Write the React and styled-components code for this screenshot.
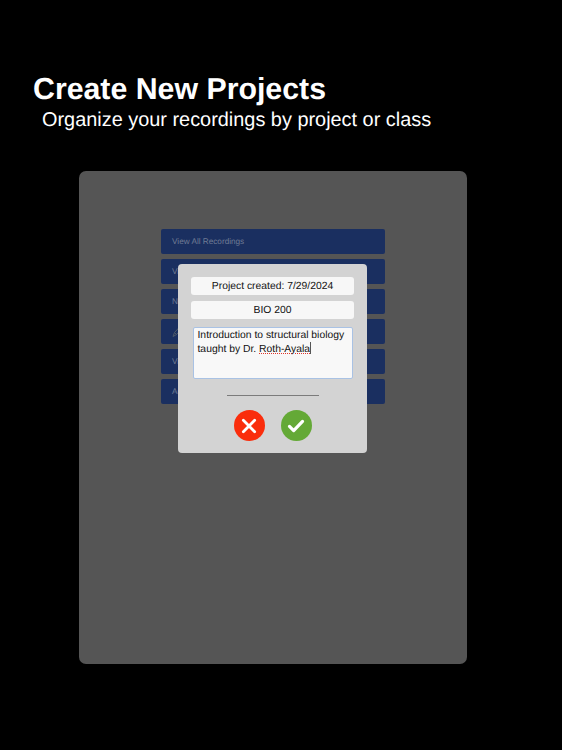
import React from "react";
import styled, { createGlobalStyle } from "styled-components";

const Global = createGlobalStyle`
  html, body { margin: 0; padding: 0; background: #000; }
  body { font-family: "Liberation Sans", Arial, sans-serif; text-rendering: geometricPrecision; }
  * { box-sizing: border-box; }
`;

const Page = styled.div`
  width: 562px;
  height: 750px;
  background: #000;
  overflow: hidden;
  display: flex;
  flex-direction: column;
`;

const Header = styled.header`
  height: 171px;
  padding: 72px 0 0 33px;
  color: #fff;
`;

const Title = styled.h1`
  margin: 0;
  font-size: 30.3px;
  line-height: 35px;
  font-weight: 700;
`;

const Subtitle = styled.p`
  margin: 1px 0 0 9px;
  font-size: 19.9px;
  line-height: 25px;
  font-weight: 400;
`;

const Tablet = styled.main`
  position: relative;
  width: 388px;
  height: 493px;
  margin-left: 79px;
  background: #555555;
  border-radius: 7px;
  padding: 58px 0 0 82px;
  display: flex;
  flex-direction: column;
  gap: 5px;
`;

const MenuRow = styled.div`
  width: 224px;
  height: 25px;
  background: #1a2f60;
  border-radius: 2px;
  padding: 0 0 1px 11px;
  display: flex;
  align-items: center;
  color: #6f7b94;
  font-size: 8.2px;
`;

const Dialog = styled.section`
  position: absolute;
  left: 99px;
  top: 93px;
  width: 189px;
  height: 189px;
  background: #d3d3d3;
  border-radius: 4px;
  padding: 13px 13px 0;
  display: flex;
  flex-direction: column;
  align-items: center;
`;

const Field = styled.div`
  width: 163px;
  height: 18px;
  margin-bottom: 6px;
  padding-top: 1px;
  background: #f7f7f7;
  border-radius: 3px;
  display: flex;
  align-items: center;
  justify-content: center;
  color: #111;
  font-size: 10.35px;
`;

const Notes = styled.div`
  width: 160px;
  height: 52px;
  margin-top: 2px;
  padding: 2px 3px 1px 4px;
  background: #f8f8f8;
  border: 1px solid #a9c2e4;
  border-radius: 2px;
  color: #111;
  font-size: 10.35px;
  line-height: 11.6px;
`;

const NoteLine = styled.div`
  white-space: nowrap;
`;

const Misspelled = styled.span`
  text-decoration: underline dotted #e0352b 1px;
  text-underline-offset: 1px;
`;

const Caret = styled.span`
  display: inline-block;
  width: 1px;
  height: 12px;
  background: #555;
  vertical-align: -2px;
`;

const Divider = styled.hr`
  width: 92px;
  height: 1px;
  margin: 16px 0 14px;
  border: 0;
  background: #7b7b7b;
`;

const Actions = styled.div`
  display: flex;
  gap: 16px;
`;

const RoundButton = styled.button`
  width: 31px;
  height: 31px;
  padding: 0;
  border: 0;
  border-radius: 50%;
  background: ${(p) => p.$color};
  display: flex;
  align-items: center;
  justify-content: center;
`;

const Pencil = () => (
  <svg width="12" height="14" viewBox="0 0 12 14" fill="none" stroke="#4e5a68" strokeWidth="1">
    <path d="M1 12.5 L2.5 8.5 L9 1.5 L11 3.5 L4.5 10.5 Z M2.5 8.5 L4.5 10.5" />
  </svg>
);

export default function App() {
  return (
    <Page>
      <Global />
      <Header>
        <Title>Create New Projects</Title>
        <Subtitle>Organize your recordings by project or class</Subtitle>
      </Header>
      <Tablet>
        <MenuRow>View All Recordings</MenuRow>
        <MenuRow>View</MenuRow>
        <MenuRow>New</MenuRow>
        <MenuRow><Pencil /></MenuRow>
        <MenuRow>View</MenuRow>
        <MenuRow>Add</MenuRow>
        <Dialog>
          <Field>Project created: 7/29/2024</Field>
          <Field>BIO 200</Field>
          <Notes>
            <NoteLine>Introduction to structural biology</NoteLine>
            <NoteLine>taught by Dr. <Misspelled>Roth-Ayala</Misspelled><Caret /></NoteLine>
          </Notes>
          <Divider />
          <Actions>
            <RoundButton $color="#fa2d0c" aria-label="Cancel">
              <svg width="16" height="16" viewBox="0 0 17 17" fill="none" stroke="#fff" strokeWidth="3" strokeLinecap="round">
                <path d="M2.5 2.5 L14.5 14.5 M14.5 2.5 L2.5 14.5" />
              </svg>
            </RoundButton>
            <RoundButton $color="#64a936" aria-label="Confirm">
              <svg width="18" height="14" viewBox="0 0 19 15" fill="none" stroke="#fff" strokeWidth="3.4" strokeLinecap="round" strokeLinejoin="round">
                <path d="M2.5 8 L7 12.5 L16.5 2.5" />
              </svg>
            </RoundButton>
          </Actions>
        </Dialog>
      </Tablet>
    </Page>
  );
}
